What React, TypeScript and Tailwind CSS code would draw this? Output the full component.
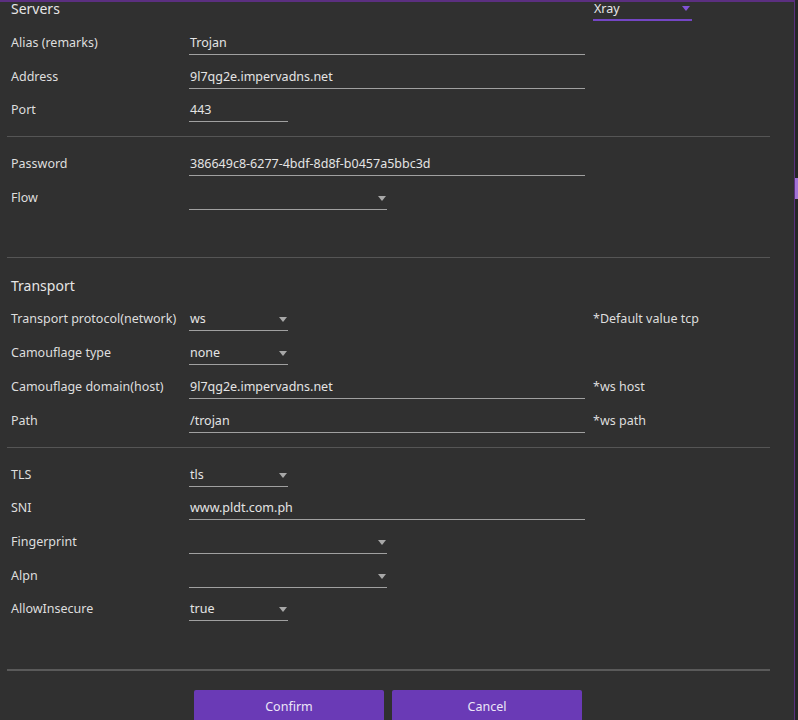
import React from "react";

const FONT = { fontFamily: '"Noto Sans", "Open Sans", sans-serif' };

type FieldKind = "text" | "select";

function Caret({ color = "#a8a8a8" }: { color?: string }) {
  return (
    <svg width="8" height="5" viewBox="0 0 8 5" className="shrink-0">
      <path d="M0 0 L8 0 L4 5 Z" fill={color} />
    </svg>
  );
}

function Field({
  value,
  kind,
  width,
}: {
  value: string;
  kind: FieldKind;
  width: string;
}) {
  return (
    <div
      className={`flex h-[24px] items-start justify-between border-b border-[#a0a0a0] pt-[2px] ${width}`}
    >
      <span className="whitespace-nowrap pl-[1px] text-[12.5px] leading-[20px] text-[#e4e4e4]">
        {value}
      </span>
      {kind === "select" && (
        <span className="flex h-[20px] items-center pr-[1px]">
          <Caret />
        </span>
      )}
    </div>
  );
}

function Row({
  label,
  value = "",
  kind = "text",
  width = "w-[396px]",
  note,
  h,
}: {
  label: string;
  value?: string;
  kind?: FieldKind;
  width?: string;
  note?: string;
  h: string;
}) {
  return (
    <div className={`flex shrink-0 items-start ${h}`}>
      <div className="w-[189px] shrink-0 whitespace-nowrap pl-[11px] pt-[2px] text-[12.5px] leading-[20px] text-[#dedede]">
        {label}
      </div>
      <div className="w-[404px] shrink-0">
        <Field value={value} kind={kind} width={width} />
      </div>
      {note && (
        <div className="whitespace-nowrap pt-[2px] text-[12.5px] leading-[20px] text-[#dedede]">
          {note}
        </div>
      )}
    </div>
  );
}

function Divider({ className = "" }: { className?: string }) {
  return <div className={`ml-[7px] w-[763px] shrink-0 ${className}`} />;
}

export default function App() {
  const short = "w-[99px]";
  const medium = "w-[198px]";

  return (
    <div
      className="flex h-[720px] w-[798px] overflow-hidden bg-[#303030]"
      style={FONT}
    >
      <div className="flex w-[794px] shrink-0 flex-col border-t-2 border-[#5b2f80]">
        {/* header */}
        <div className="flex h-[29px] shrink-0 items-start">
          <div className="w-[593px] pl-[11px] text-[14px] leading-[14px] text-[#e6e6e6]">
            Servers
          </div>
          <div className="flex h-[19px] w-[99px] items-start justify-between border-b-2 border-[#7446c4] pl-[1px]">
            <span className="text-[12.5px] leading-[13px] text-[#e6e6e6]">Xray</span>
            <span className="flex h-[13px] items-center pr-[2px]">
              <Caret color="#8152d6" />
            </span>
          </div>
        </div>

        <Row label="Alias (remarks)" value="Trojan" h="h-[34px]" />
        <Row label="Address" value="9l7qg2e.impervadns.net" h="h-[33px]" />
        <Row label="Port" value="443" width={short} h="h-[38px]" />

        <Divider className="h-px bg-[#555555]" />

        <div className="h-[15px] shrink-0" />
        <Row label="Password" value="386649c8-6277-4bdf-8d8f-b0457a5bbc3d" h="h-[34px]" />
        <Row label="Flow" kind="select" width={medium} h="h-[71px]" />

        <Divider className="h-px bg-[#555555]" />

        <div className="h-[49px] shrink-0 pl-[11px] pt-[18px] text-[14px] leading-[20px] text-[#e6e6e6]">
          Transport
        </div>

        <Row
          label="Transport protocol(network)"
          value="ws"
          kind="select"
          width={short}
          note="*Default value tcp"
          h="h-[34px]"
        />
        <Row label="Camouflage type" value="none" kind="select" width={short} h="h-[34px]" />
        <Row
          label="Camouflage domain(host)"
          value="9l7qg2e.impervadns.net"
          note="*ws host"
          h="h-[34px]"
        />
        <Row label="Path" value="/trojan" note="*ws path" h="h-[38px]" />

        <Divider className="h-px bg-[#555555]" />

        <div className="h-[15px] shrink-0" />
        <Row label="TLS" value="tls" kind="select" width={short} h="h-[33px]" />
        <Row label="SNI" value="www.pldt.com.ph" h="h-[34px]" />
        <Row label="Fingerprint" kind="select" width={medium} h="h-[34px]" />
        <Row label="Alpn" kind="select" width={medium} h="h-[33px]" />
        <Row label="AllowInsecure" value="true" kind="select" width={short} h="h-[72px]" />

        <Divider className="h-[2px] bg-[#5a5a5a]" />

        <div className="flex shrink-0 gap-[8px] pl-[194px] pt-[19px]">
          <button className="h-[34px] w-[190px] rounded-[2px] bg-[#6a3ab6] text-[12.5px] text-[#ece6f7]">
            Confirm
          </button>
          <button className="h-[34px] w-[190px] rounded-[2px] bg-[#6a3ab6] text-[12.5px] text-[#ece6f7]">
            Cancel
          </button>
        </div>
      </div>

      {/* window edge */}
      <div className="w-px shrink-0 bg-[#5b2f80]" />
      <div className="flex w-[3px] shrink-0 flex-col bg-[#262626]">
        <div className="h-[178px] shrink-0" />
        <div className="h-[21px] shrink-0 bg-[#a374d6]" />
      </div>
    </div>
  );
}
